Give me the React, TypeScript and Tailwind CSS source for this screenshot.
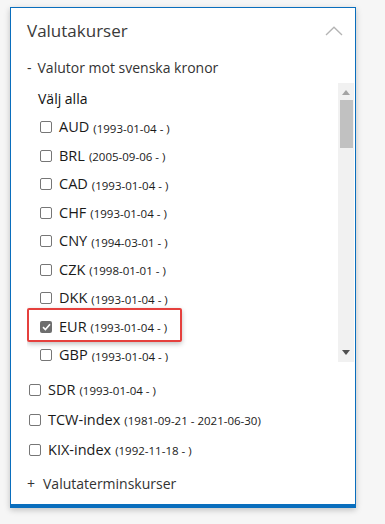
const font = { fontFamily: '"Open Sans", "Noto Sans", sans-serif' };

const inList = [
  { code: 'AUD', range: '(1993-01-04 - )' },
  { code: 'BRL', range: '(2005-09-06 - )' },
  { code: 'CAD', range: '(1993-01-04 - )' },
  { code: 'CHF', range: '(1993-01-04 - )' },
  { code: 'CNY', range: '(1994-03-01 - )' },
  { code: 'CZK', range: '(1998-01-01 - )' },
  { code: 'DKK', range: '(1993-01-04 - )' },
  { code: 'EUR', range: '(1993-01-04 - )', checked: true },
  { code: 'GBP', range: '(1993-01-04 - )' },
];

const others = [
  { code: 'SDR', range: '(1993-01-04 - )' },
  { code: 'TCW-index', range: '(1981-09-21 - 2021-06-30)' },
  { code: 'KIX-index', range: '(1992-11-18 - )' },
];

const Box = ({ checked }: { checked?: boolean }) =>
  checked ? (
    <span className="w-[12px] h-[12px] rounded-[2px] bg-[#6e6e6e] flex items-center justify-center flex-shrink-0">
      <svg width="9" height="8" viewBox="0 0 9 8">
        <path d="M1 4.2 L3.4 6.5 L8 1.3" stroke="#fff" strokeWidth="1.6" fill="none" />
      </svg>
    </span>
  ) : (
    <span className="w-[12px] h-[12px] rounded-[2px] border border-[#767676] bg-white flex-shrink-0" />
  );

const Item = ({ code, range, checked }: { code: string; range: string; checked?: boolean }) => (
  <>
    <Box checked={checked} />
    <span className="text-[14.5px] text-[#1a1a1a] leading-none">{code}</span>
    <span className="text-[11.5px] text-[#1a1a1a] leading-none -ml-[3px] mt-[2px]">{range}</span>
  </>
);

export default function App() {
  return (
    <div className="min-h-screen bg-[#f6f6f6] pt-[7px] pl-[10px]" style={font}>
      <div className="w-[346px] h-[501px] bg-white border border-[#0a6ebd] border-b-4 shadow-[0_2px_6px_rgba(0,0,0,0.22)] flex flex-col">
        {/* Header */}
        <div className="h-[46px] flex items-center justify-between pl-[16px] pr-[12px]">
          <span className="text-[17px] text-[#3a3a3a]">Valutakurser</span>
          <svg width="18" height="10" viewBox="0 0 18 10">
            <path d="M1 9 L9 1.2 L17 9" stroke="#b4b4b4" strokeWidth="1.3" fill="none" />
          </svg>
        </div>

        <div className="h-[26px] flex items-center pl-[16px] gap-[6px] text-[14px] text-[#333]">
          <span>-</span>
          <span>Valutor mot svenska kronor</span>
        </div>

        {/* Scroll list */}
        <div className="mt-[3px] h-[279px] flex pl-[16px] pr-[1px]">
          <div className="flex-1 overflow-hidden">
            <div className="h-[30px] flex items-center pl-[11px] text-[14px] text-[#111]">Välj alla</div>
            {inList.map((c) => (
              <div key={c.code} className="relative h-[28.5px] flex items-center pl-[13px] gap-[7px]">
                {c.checked && (
                  <div className="absolute left-0 top-[-5px] w-[155px] h-[34px] border-2 border-[#e5403d] rounded-[2px] shadow-[0_2px_5px_rgba(0,0,0,0.25)]" />
                )}
                <Item {...c} />
              </div>
            ))}
          </div>
          <div className="w-[16px] bg-[#f1f1f1] flex flex-col">
            <div className="h-[17px] flex items-center justify-center pt-[1px]">
              <svg width="8" height="5" viewBox="0 0 8 5">
                <path d="M0 5 L4 0 L8 5 Z" fill="#a3a3a3" />
              </svg>
            </div>
            <div className="h-[48px] ml-[2px] mr-[1px] bg-[#c1c1c1]" />
            <div className="flex-1" />
            <div className="h-[17px] flex items-center justify-center pb-[2px]">
              <svg width="8" height="5" viewBox="0 0 8 5">
                <path d="M0 0 L8 0 L4 5 Z" fill="#505050" />
              </svg>
            </div>
          </div>
        </div>

        <div className="mt-[13px] pl-[18px]">
          {others.map((c) => (
            <div key={c.code} className="h-[30px] flex items-center gap-[7px]">
              <Item {...c} />
            </div>
          ))}
        </div>

        <div className="h-[36px] flex items-center pl-[16px] gap-[8px] text-[14px] text-[#333]">
          <span>+</span>
          <span>Valutaterminskurser</span>
        </div>
      </div>
    </div>
  );
}
